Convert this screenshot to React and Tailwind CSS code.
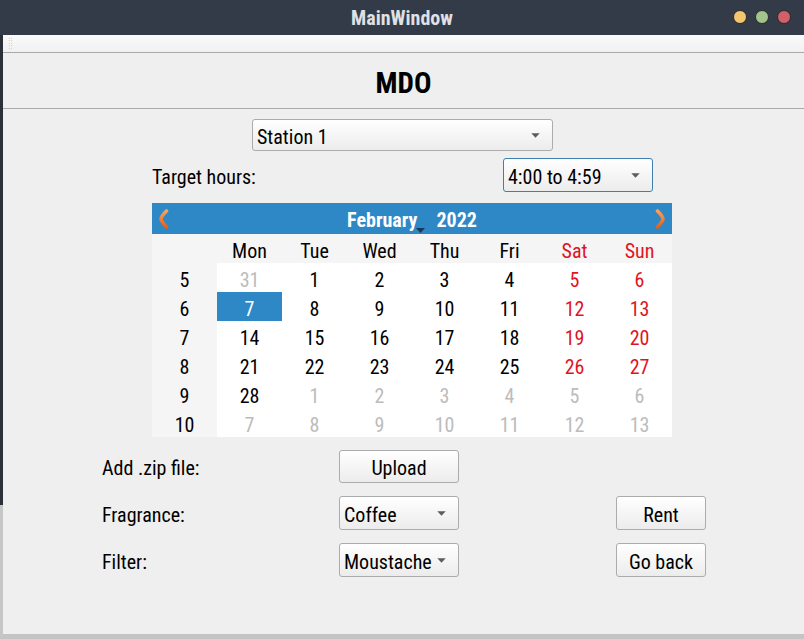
import React from 'react';

const Arrow = ({ className = '' }) => (
    <svg width="9" height="5" viewBox="0 0 9 5" className={`shrink-0 ${className}`}>
        <path d="M0.3 0.3 L8.7 0.3 L4.5 4.8 Z" fill="#5c5c5c" />
    </svg>
);

const Combo = ({ label, className = '', focused = false }) => (
    <div
        className={`flex items-center justify-between pl-[4px] pr-[12px] pt-[3px] rounded-[3px] border bg-gradient-to-b from-[#ffffff] to-[#ececec] ${focused ? 'border-[#3f7fae]' : 'border-[#acacac]'} ${className}`}
    >
        <span className="text-[20px] leading-none text-black">{label}</span>
        <Arrow className="-mt-[3px]" />
    </div>
);

const Button = ({ label, className = '' }) => (
    <div className={`flex items-center justify-center pt-[3px] rounded-[3px] border border-[#acacac] bg-gradient-to-b from-[#ffffff] to-[#ececec] text-[20px] leading-none text-black ${className}`}>
        {label}
    </div>
);

// curved orange navigation arrow of the calendar
const Chevron = ({ flip = false }) => (
    <svg width="11" height="20" viewBox="0 0 11 20" className={flip ? 'scale-x-[-1]' : ''}>
        <defs>
            <linearGradient id={flip ? 'chevR' : 'chevL'} x1="0" y1="0" x2="0" y2="1">
                <stop offset="0" stopColor="#f7a25a" />
                <stop offset="1" stopColor="#e4601c" />
            </linearGradient>
        </defs>
        <path
            d="M8.5 2 Q3.5 7 3 10 Q3.5 13 8.5 18"
            fill="none"
            stroke={`url(#${flip ? 'chevR' : 'chevL'})`}
            strokeWidth="3.6"
            strokeLinecap="round"
        />
    </svg>
);

const days = ['Mon', 'Tue', 'Wed', 'Thu', 'Fri', 'Sat', 'Sun'];

// each week: [weekNo, [day, inMonth]]
const weeks = [
    [5, [[31, false], [1, true], [2, true], [3, true], [4, true], [5, true], [6, true]]],
    [6, [[7, true], [8, true], [9, true], [10, true], [11, true], [12, true], [13, true]]],
    [7, [[14, true], [15, true], [16, true], [17, true], [18, true], [19, true], [20, true]]],
    [8, [[21, true], [22, true], [23, true], [24, true], [25, true], [26, true], [27, true]]],
    [9, [[28, true], [1, false], [2, false], [3, false], [4, false], [5, false], [6, false]]],
    [10, [[7, false], [8, false], [9, false], [10, false], [11, false], [12, false], [13, false]]],
];

const Calendar = () => (
    <div className="w-[520px]">
        {/* Navigation bar */}
        <div className="h-[31px] bg-[#2e88c6] flex items-center justify-between px-[6px]">
            <Chevron />
            <div className="flex items-center pt-[3px] text-white font-bold text-[20px] leading-none">
                <span className="relative">
                    February
                    <svg width="9" height="5" viewBox="0 0 9 5" className="absolute right-[-8px] bottom-[-3px]">
                        <path d="M0 0 L9 0 L4.5 5 Z" fill="#173a58" />
                    </svg>
                </span>
                <span className="ml-[19px]">2022</span>
            </div>
            <Chevron flip />
        </div>

        <div className="grid grid-cols-8 text-[20px] leading-none">
            {/* Day names */}
            <div className="h-[29px] bg-[#f5f5f5]" />
            {days.map((d, i) => (
                <div key={d} className={`h-[29px] pt-[4px] bg-[#f5f5f5] flex items-center justify-center ${i >= 5 ? 'text-[#e0141e]' : 'text-black'}`}>
                    {d}
                </div>
            ))}

            {weeks.map(([wk, cells]) => (
                <React.Fragment key={wk}>
                    <div className="h-[29px] pt-[4px] bg-[#f5f5f5] flex items-center justify-center text-black">{wk}</div>
                    {cells.map(([n, inMonth], i) => {
                        const selected = wk === 6 && n === 7;
                        let color = 'text-black';
                        if (!inMonth) color = 'text-[#bcbcbc]';
                        else if (i >= 5) color = 'text-[#e0141e]';
                        if (selected) color = 'text-white';
                        return (
                            <div
                                key={i}
                                className={`h-[29px] pt-[4px] flex items-center justify-center ${selected ? 'bg-[#2e88c6]' : 'bg-white'} ${color}`}
                            >
                                {n}
                            </div>
                        );
                    })}
                </React.Fragment>
            ))}
        </div>
    </div>
);

export default function App() {
    return (
        <div className="w-[804px] h-[639px] flex flex-col overflow-hidden bg-[#efefef] font-[family-name:'Roboto','Liberation_Sans',sans-serif] [font-stretch:75%]">
            {/* Title bar */}
            <div className="h-[35px] shrink-0 bg-[#343b48] relative flex items-center justify-center">
                <span className="text-[#dfe1e5] font-bold text-[20px] leading-none">MainWindow</span>
                <div className="absolute right-[13px] top-[10px] flex gap-[8px]">
                    <div className="w-[14px] h-[14px] rounded-full bg-[#f2c66f] border border-[#2a2a2a]" />
                    <div className="w-[14px] h-[14px] rounded-full bg-[#a3c38c] border border-[#2a2a2a]" />
                    <div className="w-[14px] h-[14px] rounded-full bg-[#d0606a] border border-[#2a2a2a]" />
                </div>
            </div>

            <div className="flex-1 flex">
                {/* left window edge */}
                <div className="w-[3px] flex flex-col">
                    <div className="h-[470px] bg-[#2c3038]" />
                    <div className="flex-1 bg-[#c6c6c6]" />
                </div>

                <div className="flex-1 flex flex-col">
                    {/* Toolbar */}
                    <div className="h-[18px] bg-gradient-to-b from-[#fafafa] to-[#f1f1f1] border-b border-[#a9a9a9] flex items-center pl-[5px]">
                        <div className="w-[5px] h-[13px] bg-[radial-gradient(#b5b5b5_35%,transparent_40%)] bg-[length:2.5px_2.5px]" />
                    </div>

                    {/* Header */}
                    <div className="h-[56px] pt-[5px] border-b border-[#a9a9a9] flex items-center justify-center">
                        <span className="text-black font-bold text-[29px] leading-none">MDO</span>
                    </div>

                    {/* Content */}
                    <div className="flex-1 flex flex-col">
                        <Combo label="Station 1" className="w-[301px] h-[32px] mt-[10px] ml-[249px]" />

                        <div className="ml-[149px] w-[520px] mt-[7px] flex items-center justify-between">
                            <span className="text-[20px] leading-none text-black pt-[3px]">Target hours:</span>
                            <Combo label="4:00 to 4:59" focused className="w-[150px] h-[34px] mr-[19px]" />
                        </div>

                        <div className="ml-[149px] mt-[11px]">
                            <Calendar />
                        </div>

                        <div className="ml-[99px] mt-[13px] grid grid-cols-[237px_120px_157px_90px] gap-y-[13px] items-center text-[20px] leading-none text-black">
                            <span className="pt-[3px]">Add .zip file:</span>
                            <Button label="Upload" className="h-[33px]" />
                            <span />
                            <span />

                            <span className="pt-[3px]">Fragrance:</span>
                            <Combo label="Coffee" className="h-[34px]" />
                            <span />
                            <Button label="Rent" className="h-[34px]" />

                            <span className="pt-[3px]">Filter:</span>
                            <Combo label="Moustache" className="h-[34px]" />
                            <span />
                            <Button label="Go back" className="h-[34px]" />
                        </div>
                    </div>

                    {/* bottom edge */}
                    <div className="h-[5px] bg-[#c4c4c4]" />
                </div>
            </div>
        </div>
    );
}
